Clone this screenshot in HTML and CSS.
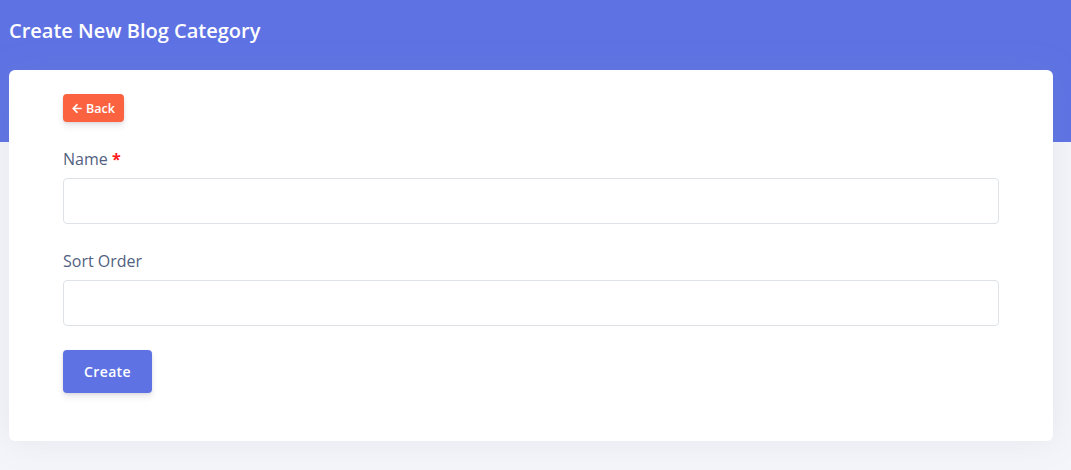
FILE: index.html
```html
<!DOCTYPE html>
<html>
<head>
<meta charset="utf-8">
<link rel="stylesheet" href="styles.css">
</head>
<body>
<header class="hero">
  <h1 class="title">Create New Blog Category</h1>
</header>
<main class="card">
  <div class="back-row">
    <a class="btn-back" href="#"><svg class="arrow" viewBox="0 0 448 512" width="10" height="11"><path fill="currentColor" d="M257.5 445.1l-22.2 22.2c-9.4 9.4-24.6 9.4-33.9 0L7 273c-9.4-9.4-9.4-24.6 0-33.9L201.4 44.7c9.4-9.4 24.6-9.4 33.9 0l22.2 22.2c9.5 9.5 9.3 25-.4 34.3L136.6 216H424c13.3 0 24 10.7 24 24v32c0 13.3-10.7 24-24 24H136.6l120.5 114.8c9.8 9.3 10 24.8.4 34.3z"/></svg>Back</a>
  </div>
  <form class="form">
    <div class="field">
      <label class="label">Name <span class="req">*</span></label>
      <input class="input" type="text">
    </div>
    <div class="field">
      <label class="label">Sort Order</label>
      <input class="input" type="text">
    </div>
    <div class="actions">
      <button class="btn-create" type="button">Create</button>
    </div>
  </form>
</main>
</body>
</html>
```
FILE: styles.css
```css
* { box-sizing: border-box; }
html, body { margin: 0; padding: 0; }
body {
  background: #f4f5fa;
  font-family: "Open Sans", "Noto Sans", sans-serif;
  width: 1071px;
  height: 470px;
  overflow: hidden;
}
.hero {
  background: #5e72e4;
  height: 142px;
  padding: 19px 9px 0;
}
.title {
  margin: 0;
  color: #fff;
  font-size: 20px;
  font-weight: 600;
  line-height: 24px;
}
.card {
  display: block;
  margin: -72px 18px 0 9px;
  background: #fff;
  border-radius: 6px;
  box-shadow: 0 0 32px rgba(136, 152, 170, 0.15);
  padding: 24px 54px 48px;
}
.back-row { display: flex; }
.btn-back {
  display: inline-flex;
  align-items: center;
  gap: 4px;
  height: 28px;
  width: 61px;
  padding: 0 0 0 9px;
  background: #fb6340;
  color: #fff;
  border-radius: 4px;
  font-size: 12.5px;
  font-weight: 600;
  text-decoration: none;
  box-shadow: 0 4px 6px rgba(50, 50, 93, 0.11), 0 1px 3px rgba(0, 0, 0, 0.08);
}
.arrow { display: block; }
.form {
  display: flex;
  flex-direction: column;
  gap: 26px;
  margin-top: 26px;
}
.field {
  display: flex;
  flex-direction: column;
  gap: 8px;
}
.label {
  color: #525f7f;
  font-size: 16px;
  line-height: 22px;
}
.req { color: #ff1a1a; font-weight: 700; }
.input {
  height: 46px;
  border: 1px solid #dee2e6;
  border-radius: 4px;
  background: #fff;
  width: 100%;
}
.actions { display: flex; margin-top: -2px; }
.btn-create {
  height: 43px;
  width: 89px;
  border: none;
  border-radius: 4px;
  background: #5e72e4;
  color: #fff;
  font-family: "Open Sans", sans-serif;
  font-size: 14px;
  font-weight: 600;
  letter-spacing: 0.025em;
  box-shadow: 0 4px 6px rgba(50, 50, 93, 0.11), 0 1px 3px rgba(0, 0, 0, 0.08);
}
```
